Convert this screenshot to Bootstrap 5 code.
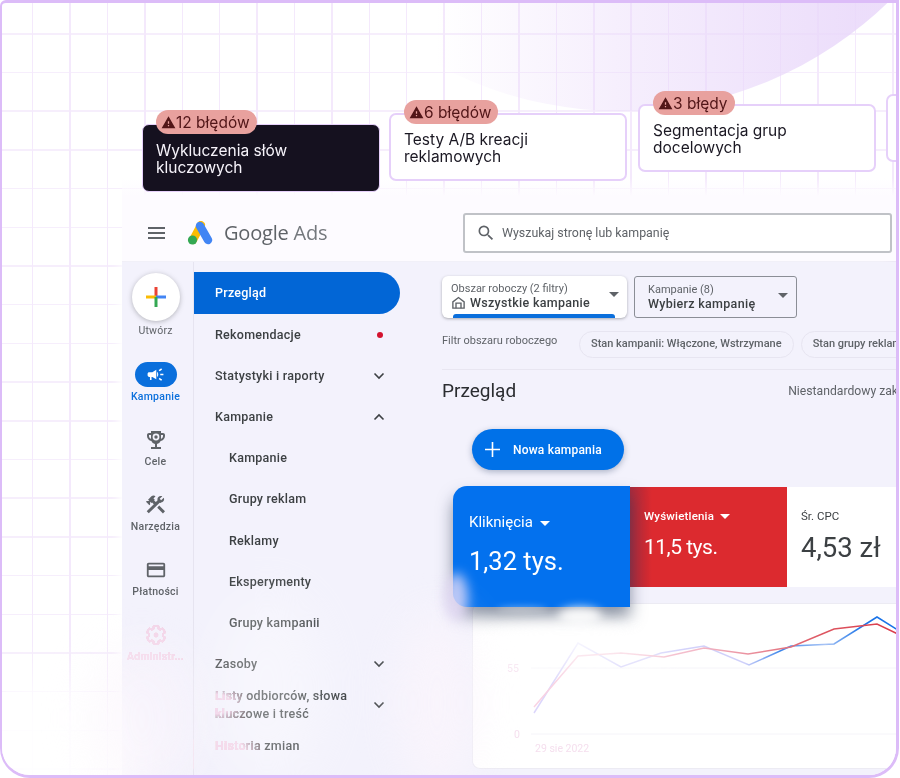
<!DOCTYPE html>
<html lang="pl">

<head>
  <meta charset="UTF-8" />
  <meta name="viewport" content="width=device-width, initial-scale=1" />
  <title>Google Ads</title>
  <link href="https://cdn.jsdelivr.net/npm/bootstrap@5.3.3/dist/css/bootstrap.min.css" rel="stylesheet" />
  <style>
    body {
      margin: 0;
      background: #fff;
      font-family: Roboto, "Liberation Sans", sans-serif;
      color: #3c4043;
    }

    /* outer purple frame with the grid paper */
    .stage {
      position: relative;
      width: 899px;
      height: 778px;
      overflow: hidden;
      border: 3px solid #dcbcf8;
      border-left-width: 2px;
      border-radius: 6px 0 30px 30px;
      padding: 175px 0 0 120px;
      background:
        repeating-linear-gradient(to right, transparent 0 30px, #f4e9fc 30px 31.5px, transparent 31.5px 37.4px),
        repeating-linear-gradient(to bottom, transparent 0 30px, #f6eefc 30px 31.5px, transparent 31.5px 38.7px),
        #fff;
    }

    .arc {
      position: absolute;
      left: 233px;
      top: -662px;
      width: 770px;
      height: 770px;
      border-radius: 50%;
      background: linear-gradient(to right, rgba(233, 216, 250, 0) 26%, rgba(233, 216, 250, .42) 50%, rgba(233, 216, 250, .85) 80%);
    }

    /* floating task cards */
    .task {
      position: absolute;
      width: 238px;
      height: 68px;
      padding: 16px 13px 0;
      background: #fff;
      border: 2px solid #e6d0fa;
      border-radius: 7px;
      font-family: Inter, "Liberation Sans", sans-serif;
      font-size: 15.5px;
      line-height: 17px;
      color: #1b1823;
    }

    .task.on {
      padding: 17px 13px 0;
      background: #15111f;
      border-width: 1px;
      color: #f6f3fa;
    }

    .task-1 { left: 140px; top: 121px; }
    .task-2 { left: 387px; top: 110px; }
    .task-3 { left: 636px; top: 101px; }
    .task-4 { left: 884px; top: 91px; }

    .err {
      position: absolute;
      left: 13px;
      top: -15px;
      display: flex;
      align-items: center;
      height: 24px;
      padding: 0 7px 0 5px;
      border-radius: 12px;
      background: #e8a19e;
      color: #521618;
      font-size: 15.5px;
      font-weight: 400;
    }

    /* app window */
    .app {
      position: relative;
      height: 100%;
    }

    .app-head {
      height: 84px;
      padding: 0 4px 8px 26px;
      background: linear-gradient(rgba(253, 251, 255, 0), #fdfbff 18px);
      border-bottom: 1px solid #eceaf5;
    }

    .app-body {
      min-height: 0;
      background: #f3f2fc;
      box-shadow: -6px 0 8px -2px #fff;
    }

    .brand {
      margin-left: 10px;
      font-family: "Open Sans", Roboto, sans-serif;
      font-size: 20px;
      color: #5f6368;
      letter-spacing: -.2px;
    }

    .brand span { color: #74787d; }

    .seek {
      gap: 6px;
      width: 429px;
      height: 40px;
      margin-left: auto;
      padding-left: 11px;
      background: #fff;
      border: 2px solid #c0c2c7;
      border-radius: 3px;
      font-size: 12.4px;
      color: #5f6368;
    }

    .rail {
      width: 72px;
      flex: none;
      padding: 11px 4px 0 0;
      border-right: 1px solid #e6e4f0;
    }

    .fab {
      width: 48px;
      height: 48px;
      margin: 0 auto;
      background: #fff;
      border-radius: 50%;
      box-shadow: 0 1px 5px rgba(60, 64, 67, .35);
    }

    .rail-top {
      height: 89px;
      text-align: center;
      font-size: 10.5px;
      color: #5f6368;
      letter-spacing: .2px;
    }

    .rail-top .fab + div { margin-top: 2px; }

    .rail-item {
      height: 65px;
      text-align: center;
      font-size: 10.5px;
      font-weight: 500;
      color: #5f6368;
      letter-spacing: .25px;
    }

    .rail-ico {
      height: 25px;
      margin-bottom: 2px;
    }

    .rail-item.on { color: #0a6fdc; }

    .rail-pill {
      width: 42px;
      height: 25px;
      background: #0a6fdc;
      border-radius: 13px;
    }

    .side {
      width: 226px;
      flex: none;
      padding-top: 10px;
    }

    .side .nav-link {
      display: flex;
      align-items: center;
      justify-content: space-between;
      height: 41.2px;
      width: 206px;
      padding: 0 15px 0 21px;
      font-size: 12.5px;
      font-weight: 500;
      line-height: 18px;
      letter-spacing: .25px;
      color: #3c4043;
    }

    .side .nav-link.sub { padding-left: 35px; }

    .side .nav-link.active {
      height: 42px;
      color: #fff;
      background: #0266d6;
      border-radius: 0 21px 21px 0;
    }

    .dot {
      width: 6px;
      height: 6px;
      margin-right: 2px;
      background: #d3132f;
      border-radius: 50%;
    }

    .body-main {
      min-width: 0;
      flex: 1;
      padding: 14px 0 0 22px;
      overflow: hidden;
    }

    .pick-row { gap: 7px; }

    .pick {
      flex: none;
      height: 42px;
      padding: 6px 9px 0 9px;
      border-radius: 6px;
      font-size: 11px;
      line-height: 13px;
      color: #5f6368;
      position: relative;
    }

    .pick b {
      display: block;
      font-size: 12.5px;
      line-height: 15px;
      font-weight: 500;
      letter-spacing: .3px;
      color: #3c4043;
    }

    .pick-a {
      width: 185px;
      background: #fff;
      box-shadow: 0 1px 3px rgba(60, 64, 67, .4);
      overflow: hidden;
    }

    .pick-a::after {
      content: "";
      position: absolute;
      left: 11px;
      right: 12px;
      bottom: 0;
      height: 4px;
      background: #0b6fdc;
      border-radius: 3px 3px 0 0;
    }

    .pick-b {
      width: 163px;
      padding-left: 13px;
      border: 1px solid #8b8e96;
      border-radius: 3px;
    }

    .caret-d {
      position: absolute;
      right: 8px;
      top: 16px;
      width: 0;
      height: 0;
      border: 5px solid transparent;
      border-top: 5px solid #5f6368;
      border-bottom: 0;
    }

    .filter-row {
      height: 27px;
      margin-top: 13px;
      font-size: 11px;
      color: #5f6368;
      white-space: nowrap;
    }

    .filter-row > span {
      flex: none;
      width: 137px;
      margin-top: -7px;
    }

    .tag {
      flex: none;
      display: flex;
      align-items: center;
      height: 27px;
      padding: 0 11px;
      border: 1px solid #e7e5f1;
      border-radius: 14px;
      font-size: 11px;
      font-weight: 500;
      color: #5f6368;
    }

    .tag + .tag { margin-left: 7px; }

    .rule {
      height: 1px;
      margin: 11px 0 0;
      background: #e8e6f1;
    }

    .view-head {
      height: 43px;
      white-space: nowrap;
    }

    .view-head h1 {
      margin: 0;
      font-size: 19px;
      font-weight: 400;
      color: #2b2d31;
    }

    .view-head span {
      margin-left: 272px;
      font-size: 12.2px;
      color: #5f6368;
    }

    .btn-new {
      display: flex;
      align-items: center;
      gap: 13px;
      width: 152px;
      height: 41px;
      margin: 16px 0 0 30px;
      padding: 0 0 0 13px;
      background: #0071e8;
      border: 0;
      border-radius: 21px;
      color: #fff;
      font-size: 12px;
      font-weight: 500;
      letter-spacing: .2px;
      box-shadow: 0 2px 6px rgba(40, 60, 100, .35);
    }

    .metrics {
      height: 100px;
      margin: 17px 0 0 11px;
      white-space: nowrap;
    }

    .metric-blue {
      position: relative;
      width: 177px;
      height: 121px;
      margin-top: -1px;
      padding: 25px 0 0 16px;
      background: #0371ee;
      color: #fff;
      border-radius: 14px 0 0 14px;
      font-size: 15px;
      box-shadow: 0 10px 16px rgba(45, 60, 90, .55);
    }

    .metric-blue strong {
      display: block;
      margin-top: 8px;
      font-size: 25.5px;
      font-weight: 400;
    }

    .metric-red {
      width: 157px;
      padding: 21px 0 0 14px;
      background: linear-gradient(to right, #a82a3c, #dc2a2f 22px);
      color: #fff;
      font-size: 11.5px;
      font-weight: 500;
      letter-spacing: .2px;
    }

    .metric-red strong {
      display: block;
      margin-top: 7px;
      font-size: 21px;
      font-weight: 400;
      letter-spacing: -.5px;
    }

    .metric-white {
      flex: 1;
      padding: 21px 0 0 14px;
      background: #fff;
      font-size: 11.5px;
      color: #3c4043;
    }

    .metric-white strong {
      display: block;
      margin-top: 2px;
      font-size: 27.5px;
      font-weight: 400;
      color: #3c4043;
    }

    .caret-s {
      display: inline-block;
      width: 0;
      height: 0;
      margin-left: 3px;
      vertical-align: middle;
      border: 5px solid transparent;
      border-top: 5px solid #fff;
      border-bottom: 0;
    }

    .plot {
      height: 166px;
      margin: 16px 0 0 30px;
      background: #fff;
      border: 1px solid #ecebf3;
      border-right: 0;
      border-radius: 8px 0 0 8px;
    }

    .plot svg { display: block; }

    .plot text {
      font-family: Roboto, sans-serif;
      font-size: 10.5px;
      fill: #f5dfee;
    }

    /* clouds drifting over the lower left of the window */
    .tint {
      position: absolute;
      left: 118px;
      top: 605px;
      width: 280px;
      height: 170px;
      pointer-events: none;
      mix-blend-mode: lighten;
      background-color: #000;
      background-image:
        radial-gradient(ellipse 90px 60px at 22px 40px, #f3d4e8 55%, rgba(243, 212, 232, 0) 100%),
        radial-gradient(ellipse 60px 40px at 95px 146px, #f3d4e8 50%, rgba(243, 212, 232, 0) 100%),
        radial-gradient(ellipse 44px 28px at 96px 96px, #f0cfe6 35%, rgba(240, 207, 230, 0) 100%);
    }

    .haze {
      position: absolute;
      inset: 0;
      overflow: hidden;
      pointer-events: none;
    }

    .puff {
      position: absolute;
      border-radius: 50%;
      background: #fff;
    }

    .p1 { left: 85px; top: 640px; width: 110px; height: 150px; opacity: .55; filter: blur(22px); background: #fbf5fc; }
    .p2 { left: 395px; top: 610px; width: 80px; height: 180px; opacity: .75; filter: blur(20px); background: #fbf5fc; }
    .p3 { left: 442px; top: 570px; width: 24px; height: 48px; opacity: .8; filter: blur(6px); background: #e6dcf8; }
    .p4 { left: 490px; top: 625px; width: 150px; height: 20px; opacity: .85; filter: blur(8px); }
    .p5 { left: 556px; top: 604px; width: 44px; height: 18px; opacity: .9; filter: blur(5px); }
    .p6 { left: 470px; top: 636px; width: 200px; height: 32px; opacity: .6; filter: blur(12px); }
    .p7 { left: 210px; top: 590px; width: 110px; height: 190px; opacity: .35; filter: blur(26px); }
    .p8 { left: 495px; top: 603px; width: 50px; height: 6px; opacity: .35; filter: blur(3px); }
    .p9 { left: -40px; top: 670px; width: 180px; height: 160px; opacity: .9; filter: blur(24px); }
  </style>
</head>

<body>

  <div class="stage">
    <div class="arc"></div>

    <!-- App window -->
    <div class="app d-flex flex-column">
      <div class="app-head d-flex align-items-end flex-none">
        <div class="d-flex align-items-center" style="height:40px">
          <svg width="17" height="12" viewBox="0 0 17 12">
            <path d="M0 1h17M0 6h17M0 11h17" stroke="#5f6368" stroke-width="2" />
          </svg>
          <svg class="logo-mark" width="27" height="24" viewBox="0 0 27 24" style="margin-left:22px">
            <path d="M14 4L6 19" stroke="#fbbc04" stroke-width="8" stroke-linecap="round" />
            <path d="M13 5l8 14" stroke="#4285f4" stroke-width="8.5" stroke-linecap="round" />
            <circle cx="5.5" cy="19" r="4.6" fill="#34a853" />
          </svg>
          <div class="brand">Google <span>Ads</span></div>
        </div>
        <div class="seek d-flex align-items-center">
          <svg width="20" height="20" viewBox="0 0 24 24" fill="#5f6368">
            <path d="M15.5 14h-.79l-.28-.27A6.47 6.47 0 0 0 16 9.5 6.5 6.5 0 1 0 9.5 16c1.61 0 3.09-.59 4.23-1.57l.27.28v.79l5 4.99L20.49 19l-4.99-5zm-6 0C7.01 14 5 11.99 5 9.5S7.01 5 9.5 5 14 7.01 14 9.5 11.99 14 9.5 14z" />
          </svg>
          <span>Wyszukaj stronę lub kampanię</span>
        </div>
      </div>

      <div class="app-body d-flex flex-grow-1">
        <!-- Icon rail -->
        <div class="rail">
          <div class="rail-top">
            <div class="fab d-flex align-items-center justify-content-center">
              <svg width="22" height="22" viewBox="0 0 22 22">
                <path d="M11 1v10" stroke="#ea4335" stroke-width="3" />
                <path d="M1 11h10" stroke="#fbbc04" stroke-width="3" />
                <path d="M11 11h10" stroke="#4285f4" stroke-width="3" />
                <path d="M11 11v10" stroke="#34a853" stroke-width="3" />
              </svg>
            </div>
            <div>Utwórz</div>
          </div>
          <div class="rail-item on">
            <div class="rail-ico d-flex justify-content-center">
              <div class="rail-pill d-flex align-items-center justify-content-center">
                <svg width="19" height="19" viewBox="0 0 24 24" fill="#fff">
                  <path d="M18 11v2h4v-2h-4zm-2 6.61c.96.71 2.21 1.65 3.2 2.39.4-.53.8-1.07 1.2-1.6-.99-.74-2.24-1.68-3.2-2.4-.4.54-.8 1.08-1.2 1.61zM20.4 5.6c-.4-.53-.8-1.07-1.2-1.6-.99.74-2.24 1.68-3.2 2.4.4.53.8 1.07 1.2 1.6.96-.72 2.21-1.65 3.2-2.4zM4 9c-1.1 0-2 .9-2 2v2c0 1.1.9 2 2 2h1v4h2v-4h1l5 3V6L8 9H4zm11.5 3c0-1.33-.58-2.53-1.5-3.35v6.69c.92-.81 1.5-2.01 1.5-3.34z" />
                </svg>
              </div>
            </div>
            <div>Kampanie</div>
          </div>
          <div class="rail-item">
            <div class="rail-ico d-flex justify-content-center align-items-center">
              <svg width="24" height="24" viewBox="0 0 24 24" fill="#5f6368">
                <path d="M19 5h-2V3H7v2H5c-1.1 0-2 .9-2 2v1c0 2.55 1.92 4.63 4.39 4.94.63 1.5 1.98 2.63 3.61 2.96V19H7v2h10v-2h-4v-3.1c1.63-.33 2.98-1.46 3.61-2.96C19.08 12.63 21 10.55 21 8V7c0-1.1-.9-2-2-2zM5 8V7h2v3.82C5.84 10.4 5 9.3 5 8zm14 0c0 1.3-.84 2.4-2 2.82V7h2v1z" />
                <circle cx="12" cy="9" r="3.4" fill="#f3f2fc" />
                <circle cx="12" cy="9" r="1.7" />
              </svg>
            </div>
            <div>Cele</div>
          </div>
          <div class="rail-item">
            <div class="rail-ico d-flex justify-content-center align-items-center">
              <svg width="23" height="23" viewBox="0 0 24 24" fill="#5f6368">
                <path d="M13.78 15.3l6 6 2.11-2.16-6-6-2.11 2.16zM17.5 10c1.93 0 3.5-1.57 3.5-3.5 0-.58-.16-1.12-.41-1.6l-2.7 2.7-1.49-1.49 2.7-2.7c-.48-.25-1.02-.41-1.6-.41C15.57 3 14 4.57 14 6.5c0 .41.08.8.21 1.16l-1.85 1.85-1.78-1.78.71-.71-1.41-1.41L12 3.49c-1.17-1.17-3.07-1.17-4.24 0L4.22 7.03l1.41 1.41H2.81l-.71.71 3.54 3.54.71-.71V9.15l1.41 1.41.71-.71 1.78 1.78-7.41 7.41 2.12 2.12L16.34 10.2c.36.13.75.21 1.16.21z" />
              </svg>
            </div>
            <div>Narzędzia</div>
          </div>
          <div class="rail-item">
            <div class="rail-ico d-flex justify-content-center align-items-center">
              <svg width="22" height="22" viewBox="0 0 24 24" fill="#5f6368">
                <path d="M20 4H4c-1.11 0-2 .89-2 2v12c0 1.11.89 2 2 2h16c1.11 0 2-.89 2-2V6c0-1.11-.89-2-2-2zm0 14H4v-6h16v6zm0-10H4V6h16v2z" />
              </svg>
            </div>
            <div>Płatności</div>
          </div>
          <div class="rail-item">
            <div class="rail-ico d-flex justify-content-center align-items-center">
              <svg width="22" height="22" viewBox="0 0 24 24" fill="none" stroke="#5f6368" stroke-width="1.8">
                <path d="M19.43 12.98c.04-.32.07-.64.07-.98 0-.34-.03-.66-.07-.98l2.11-1.65c.19-.15.24-.42.12-.64l-2-3.46c-.09-.16-.26-.25-.44-.25-.06 0-.12.01-.17.03l-2.49 1c-.52-.4-1.08-.73-1.69-.98l-.38-2.65C14.46 2.18 14.25 2 14 2h-4c-.25 0-.46.18-.49.42l-.38 2.65c-.61.25-1.17.59-1.69.98l-2.49-1c-.06-.02-.12-.03-.18-.03-.17 0-.34.09-.43.25l-2 3.46c-.13.22-.07.49.12.64l2.11 1.65c-.04.32-.07.65-.07.98 0 .33.03.66.07.98l-2.11 1.65c-.19.15-.24.42-.12.64l2 3.46c.09.16.26.25.44.25.06 0 .12-.01.17-.03l2.49-1c.52.4 1.08.73 1.69.98l.38 2.65c.03.24.24.42.49.42h4c.25 0 .46-.18.49-.42l.38-2.65c.61-.25 1.17-.59 1.69-.98l2.49 1c.06.02.12.03.18.03.17 0 .34-.09.43-.25l2-3.46c.12-.22.07-.49-.12-.64l-2.11-1.65z" />
                <circle cx="12" cy="12" r="2.4" fill="#5f6368" stroke="none" />
              </svg>
            </div>
            <div>Administr...</div>
          </div>
        </div>

        <!-- Page menu -->
        <nav class="side nav flex-column flex-nowrap">
          <a class="nav-link active" href="#">Przegląd</a>
          <a class="nav-link" href="#">Rekomendacje<span class="dot"></span></a>
          <a class="nav-link" href="#">Statystyki i raporty
            <svg width="12" height="8" viewBox="0 0 12 8" fill="none" stroke="#3c4043" stroke-width="1.6"><path d="M1.5 1.5L6 6l4.5-4.5" /></svg></a>
          <a class="nav-link" href="#">Kampanie
            <svg width="12" height="8" viewBox="0 0 12 8" fill="none" stroke="#3c4043" stroke-width="1.6"><path d="M1.5 6.5L6 2l4.5 4.5" /></svg></a>
          <a class="nav-link sub" href="#">Kampanie</a>
          <a class="nav-link sub" href="#">Grupy reklam</a>
          <a class="nav-link sub" href="#">Reklamy</a>
          <a class="nav-link sub" href="#">Eksperymenty</a>
          <a class="nav-link sub" href="#">Grupy kampanii</a>
          <a class="nav-link" href="#">Zasoby
            <svg width="12" height="8" viewBox="0 0 12 8" fill="none" stroke="#3c4043" stroke-width="1.6"><path d="M1.5 1.5L6 6l4.5-4.5" /></svg></a>
          <a class="nav-link" href="#"><span>Listy odbiorców, słowa<br />kluczowe i treść</span>
            <svg width="12" height="8" viewBox="0 0 12 8" fill="none" stroke="#3c4043" stroke-width="1.6"><path d="M1.5 1.5L6 6l4.5-4.5" /></svg></a>
          <a class="nav-link" href="#">Historia zmian</a>
        </nav>

        <!-- Overview -->
        <div class="body-main">
          <div class="pick-row d-flex">
            <div class="pick pick-a">
              Obszar roboczy (2 filtry)
              <b class="d-flex align-items-center gap-1">
                <svg width="15" height="15" viewBox="0 0 24 24" fill="none" stroke="#5f6368" stroke-width="2.2">
                  <path d="M3 11l9-7 9 7v10H3z" /><path d="M8 21v-8h8v8" />
                </svg>Wszystkie kampanie</b>
              <span class="caret-d"></span>
            </div>
            <div class="pick pick-b">
              Kampanie (8)
              <b>Wybierz kampanię</b>
              <span class="caret-d"></span>
            </div>
          </div>

          <div class="filter-row d-flex align-items-center">
            <span>Filtr obszaru roboczego</span>
            <div class="tag">Stan kampanii: Włączone, Wstrzymane</div>
            <div class="tag">Stan grupy reklam</div>
          </div>
          <div class="rule"></div>

          <div class="view-head d-flex align-items-center">
            <h1>Przegląd</h1>
            <span>Niestandardowy zakres dat</span>
          </div>

          <button class="btn btn-new" type="button">
            <svg width="15" height="15" viewBox="0 0 15 15"><path d="M7.5 0v15M0 7.5h15" stroke="#fff" stroke-width="1.6" /></svg>
            Nowa kampania
          </button>

          <div class="metrics d-flex">
            <div class="metric-blue">Kliknięcia <span class="caret-s"></span><strong>1,32 tys.</strong></div>
            <div class="metric-red">Wyświetlenia <span class="caret-s"></span><strong>11,5 tys.</strong></div>
            <div class="metric-white">Śr. CPC<strong>4,53 zł</strong></div>
          </div>

          <div class="plot">
            <svg width="424" height="164" viewBox="472 604 424 164" fill="none">
              <defs>
                <linearGradient id="lineBlue" gradientUnits="userSpaceOnUse" x1="533" y1="0" x2="897" y2="0">
                  <stop offset="0" stop-color="#dcd6fb" />
                  <stop offset=".58" stop-color="#cfd0fa" />
                  <stop offset=".68" stop-color="#3d86ea" />
                  <stop offset=".8" stop-color="#a9c4f5" />
                  <stop offset=".9" stop-color="#1a73e8" />
                </linearGradient>
                <linearGradient id="lineRed" gradientUnits="userSpaceOnUse" x1="533" y1="0" x2="897" y2="0">
                  <stop offset="0" stop-color="#f9d3e4" />
                  <stop offset=".45" stop-color="#f3b9c8" />
                  <stop offset=".8" stop-color="#dd5560" />
                  <stop offset="1" stop-color="#d93a4a" />
                </linearGradient>
              </defs>
              <path d="M530 668H896M530 734H896" stroke="#f5f4f9" />
              <text x="506" y="672">55</text>
              <text x="513" y="738">0</text>
              <text x="534" y="752">29 sie 2022</text>
              <polyline stroke="url(#lineBlue)" stroke-width="1.5" points="533,713 577,643 620,667 660,653 703,646 748,665 790,646 833,644 876,617 897,630" />
              <polyline stroke="url(#lineRed)" stroke-width="1.5" points="533,707 577,656 620,653 663,657 703,648 747,654 790,647 833,629 876,624 897,634" />
            </svg>
          </div>
        </div>
      </div>
    </div>

    <!-- Cards over the window -->
    <div class="task on task-1"><span class="err"><svg width="15" height="15" viewBox="0 0 24 24" fill="currentColor"><path d="M1 21h22L12 2 1 21zm12-3h-2v-2h2v2zm0-4h-2v-4h2v4z" /></svg>12 błędów</span>Wykluczenia słów kluczowych</div>
    <div class="task task-2"><span class="err"><svg width="15" height="15" viewBox="0 0 24 24" fill="currentColor"><path d="M1 21h22L12 2 1 21zm12-3h-2v-2h2v2zm0-4h-2v-4h2v4z" /></svg>6 błędów</span>Testy A/B kreacji reklamowych</div>
    <div class="task task-3"><span class="err"><svg width="15" height="15" viewBox="0 0 24 24" fill="currentColor"><path d="M1 21h22L12 2 1 21zm12-3h-2v-2h2v2zm0-4h-2v-4h2v4z" /></svg>3 błędy</span>Segmentacja grup docelowych</div>
    <div class="task task-4"></div>

    <!-- Clouds -->
    <div class="tint"></div>
    <div class="haze">
      <div class="puff p9"></div>
      <div class="puff p1"></div>
      <div class="puff p7"></div>
      <div class="puff p2"></div>
      <div class="puff p3"></div>
      <div class="puff p6"></div>
      <div class="puff p4"></div>
      <div class="puff p5"></div>
      <div class="puff p8"></div>
    </div>
  </div>

  <script src="https://cdn.jsdelivr.net/npm/bootstrap@5.3.3/dist/js/bootstrap.bundle.min.js"></script>
</body>

</html>
